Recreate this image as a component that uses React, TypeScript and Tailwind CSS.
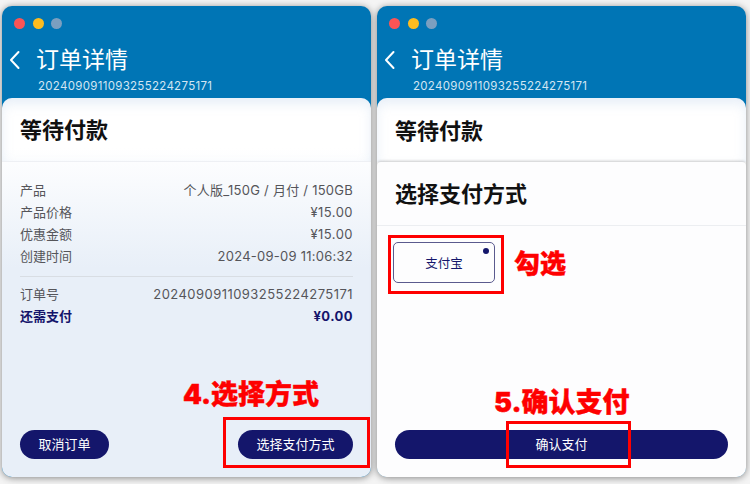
import React from 'react';

const Row = ({ label, value, strong, wide }: { label: string; value: string; strong?: boolean; wide?: boolean }) => (
  <div className={`flex h-[22px] items-center justify-between text-[13px] ${strong ? 'font-bold text-[#14146b]' : 'text-[#55555a]'}`}>
    <span>{label}</span>
    <span className={wide ? 'tracking-[0.45px]' : 'tracking-[0.25px]'}>{value}</span>
  </div>
);

const PillButton = ({ label, className }: { label: string; className: string }) => (
  <button className={`flex h-[29px] items-center justify-center rounded-full bg-[#14166b] text-[13px] text-white ${className}`}>
    {label}
  </button>
);

const AppWindow = ({ children }: { children: React.ReactNode }) => (
  <div className="relative isolate flex h-[471px] w-[369px] flex-col overflow-hidden rounded-[10px] bg-[#0075b5] shadow-[0_1px_7px_rgba(0,0,0,0.45)]">
    <div className="flex h-[36px] shrink-0 items-end gap-[7.5px] pl-[12px] pb-[13px]">
      <span className="h-[11px] w-[11px] rounded-full bg-[#fb5455]" />
      <span className="h-[11px] w-[11px] rounded-full bg-[#fdbc1f]" />
      <span className="h-[11px] w-[11px] rounded-full bg-[#7b9fc0]" />
    </div>
    <div className="flex h-[36px] shrink-0 items-center pl-[6px] text-white">
      <svg width="14" height="20" viewBox="0 0 14 20" fill="none" stroke="white" strokeWidth="2" strokeLinecap="round" strokeLinejoin="round">
        <path d="M10.5 2 L3 10 L10.5 18" />
      </svg>
      <span className="ml-[14px] text-[23px] leading-none">订单详情</span>
    </div>
    <div className="flex h-[20px] shrink-0 items-start pl-[36px] text-[11.5px] leading-[16px] tracking-[0.3px] text-[#d3e6f3]">
      2024090911093255224275171
    </div>
    <div className="relative min-h-0 flex-1 overflow-hidden rounded-t-[10px] bg-[#e8eff8]">
      {children}
    </div>
  </div>
);

export default function App() {
  return (
    <div className='flex h-[484px] w-[750px] justify-between overflow-hidden bg-[#f4f4f4] pt-[6px] pl-[2px] pr-[4px] font-["Inter","Noto_Sans_CJK_SC",sans-serif]'>
      {/* left: order details */}
      <div className="relative">
        <AppWindow>
          <div className="flex h-full flex-col bg-[linear-gradient(#ffffff_0px,#ffffff_50px,#e8eff8_170px)]">
            <div className="flex h-[64px] shrink-0 items-center border-b border-[#eef0f4] pt-[2px] pl-[18px] text-[22px] font-bold text-[#111] shadow-[inset_0_6px_14px_-2px_rgba(190,210,235,0.45)]">
              等待付款
            </div>
            <div className="px-[18px] pt-[18px]">
              <Row label="产品" value="个人版_150G / 月付 / 150GB" />
              <Row label="产品价格" value="¥15.00" wide />
              <Row label="优惠金额" value="¥15.00" wide />
              <Row label="创建时间" value="2024-09-09 11:06:32" />
              <div className="mt-[8px] mb-[7px] border-t border-[#d8dde3]" />
              <Row label="订单号" value="2024090911093255224275171" wide />
              <Row label="还需支付" value="¥0.00" strong wide />
            </div>
            <div className="mt-auto flex justify-between px-[18px] pb-[18px]">
              <PillButton label="取消订单" className="w-[89px]" />
              <PillButton label="选择支付方式" className="w-[115px]" />
            </div>
          </div>
        </AppWindow>
        <span className="absolute left-[181px] top-[372px] text-[27px] leading-[34px] font-black whitespace-nowrap text-[#fe0000] [-webkit-text-stroke:0.4px_#fe0000]">4.选择方式</span>
        <div className="absolute left-[221px] top-[411px] h-[51px] w-[147px] border-[3px] border-[#fe0000]" />
      </div>

      {/* right: payment method sheet */}
      <div className="relative">
        <AppWindow>
          <div className="flex h-full flex-col bg-white">
            <div className="flex h-[64px] shrink-0 items-center pt-[2px] pl-[18px] text-[22px] font-bold text-[#111] shadow-[inset_0_6px_14px_-2px_rgba(190,210,235,0.45)]">
              等待付款
            </div>
            <div className="z-10 flex min-h-0 flex-1 flex-col rounded-t-[4px] bg-[#fdfdfe] shadow-[0_-1px_3px_rgba(0,0,0,0.2)]">
              <div className="flex h-[64px] shrink-0 items-center border-b border-[#eceef1] pt-[2px] pl-[18px] text-[22px] font-bold text-[#111]">
                选择支付方式
              </div>
              <div className="pl-[16px] pt-[16px]">
                <div className="relative flex h-[41px] w-[102px] items-center justify-center rounded-[5px] border-[1.5px] border-[#5a5a8e] pt-[3px] text-[12.5px] text-[#14166b]">
                  支付宝
                  <span className="absolute right-[5px] top-[5px] h-[6px] w-[6px] rounded-full bg-[#14166b]" />
                </div>
              </div>
              <div className="mt-auto px-[18px] pb-[18px]">
                <PillButton label="确认支付" className="w-full" />
              </div>
            </div>
          </div>
        </AppWindow>
        <div className="absolute left-[11px] top-[229px] h-[59px] w-[116px] border-[3px] border-[#fe0000]" />
        <span className="absolute left-[137px] top-[241px] text-[26px] leading-[34px] font-black whitespace-nowrap text-[#fe0000] [-webkit-text-stroke:0.4px_#fe0000]">勾选</span>
        <span className="absolute left-[117px] top-[380px] text-[27px] leading-[34px] font-black whitespace-nowrap text-[#fe0000] [-webkit-text-stroke:0.4px_#fe0000]">5.确认支付</span>
        <div className="absolute left-[129px] top-[415px] h-[47px] w-[125px] border-[3px] border-[#fe0000]" />
      </div>
    </div>
  );
}
